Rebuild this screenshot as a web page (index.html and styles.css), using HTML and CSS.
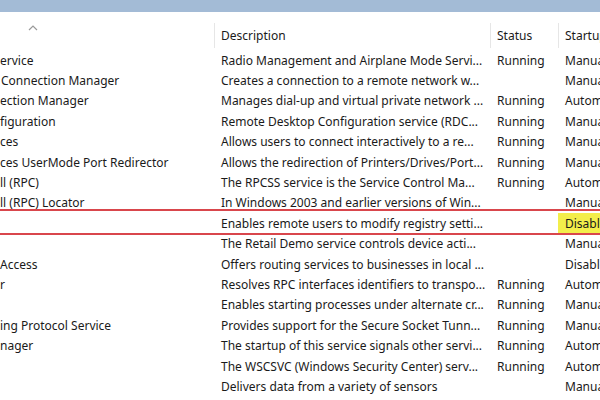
FILE: index.html
```html
<!DOCTYPE html>
<html>
<head>
<meta charset="utf-8">
<link rel="stylesheet" href="styles.css">
</head>
<body>
<div class="titlebar"></div>
<div class="table">
  <div class="head">
    <div class="hcell name"><svg class="caret" width="10" height="6" viewBox="0 0 10 6"><polyline points="1,5 5,1 9,5" fill="none" stroke="#9a9a9a" stroke-width="1.2"/></svg></div>
    <div class="hcell sep">Description</div>
    <div class="hcell sep">Status</div>
    <div class="hcell sep">Startup</div>
  </div>
  <div class="rows">
    <div class="row"><div class="c name">ervice</div><div class="c">Radio Management and Airplane Mode Servi...</div><div class="c">Running</div><div class="c">Manual</div></div>
    <div class="row"><div class="c name pad">Connection Manager</div><div class="c">Creates a connection to a remote network w...</div><div class="c"></div><div class="c">Manual</div></div>
    <div class="row"><div class="c name">ection Manager</div><div class="c">Manages dial-up and virtual private network ...</div><div class="c">Running</div><div class="c">Automatic</div></div>
    <div class="row"><div class="c name">figuration</div><div class="c">Remote Desktop Configuration service (RDC...</div><div class="c">Running</div><div class="c">Manual</div></div>
    <div class="row"><div class="c name">ces</div><div class="c">Allows users to connect interactively to a re...</div><div class="c">Running</div><div class="c">Manual</div></div>
    <div class="row"><div class="c name">ces UserMode Port Redirector</div><div class="c">Allows the redirection of Printers/Drives/Port...</div><div class="c">Running</div><div class="c">Manual</div></div>
    <div class="row"><div class="c name">ll (RPC)</div><div class="c">The RPCSS service is the Service Control Ma...</div><div class="c">Running</div><div class="c">Automatic</div></div>
    <div class="row"><div class="c name">ll (RPC) Locator</div><div class="c">In Windows 2003 and earlier versions of Win...</div><div class="c"></div><div class="c">Manual</div></div>
    <div class="row"><div class="c name"></div><div class="c">Enables remote users to modify registry setti...</div><div class="c"></div><div class="c hl">Disabled</div></div>
    <div class="row"><div class="c name"></div><div class="c">The Retail Demo service controls device acti...</div><div class="c"></div><div class="c">Manual</div></div>
    <div class="row"><div class="c name">Access</div><div class="c">Offers routing services to businesses in local ...</div><div class="c"></div><div class="c">Disabled</div></div>
    <div class="row"><div class="c name">r</div><div class="c">Resolves RPC interfaces identifiers to transpo...</div><div class="c">Running</div><div class="c">Automatic</div></div>
    <div class="row"><div class="c name"></div><div class="c">Enables starting processes under alternate cr...</div><div class="c">Running</div><div class="c">Manual</div></div>
    <div class="row"><div class="c name">ing Protocol Service</div><div class="c">Provides support for the Secure Socket Tunn...</div><div class="c">Running</div><div class="c">Manual</div></div>
    <div class="row"><div class="c name">nager</div><div class="c">The startup of this service signals other servi...</div><div class="c">Running</div><div class="c">Automatic</div></div>
    <div class="row"><div class="c name"></div><div class="c">The WSCSVC (Windows Security Center) serv...</div><div class="c">Running</div><div class="c">Automatic</div></div>
    <div class="row"><div class="c name"></div><div class="c">Delivers data from a variety of sensors</div><div class="c"></div><div class="c">Manual</div></div>
  </div>
  <div class="redline top"></div>
  <div class="redline bottom"></div>
</div>
</body>
</html>
```
FILE: styles.css
```css
html, body {
  margin: 0;
  padding: 0;
  background: #ffffff;
  width: 600px;
  height: 400px;
  overflow: hidden;
}
body {
  font-family: "Noto Sans", "Open Sans", sans-serif;
  font-size: 12px;
  color: #1a1a1a;
}
.titlebar {
  height: 12px;
  background: #a3bbd6;
}
.table {
  position: relative;
}
.head {
  display: grid;
  grid-template-columns: 214px 276px 68px 42px;
  height: 38px;
}
.hcell {
  display: flex;
  align-items: center;
  padding-left: 7px;
  white-space: nowrap;
  overflow: hidden;
  position: relative;
  padding-top: 8px;
}
.hcell.name {
  align-items: flex-start;
  padding-top: 13px;
  padding-left: 28px;
}
.hcell.sep::before {
  content: "";
  position: absolute;
  left: 0;
  top: 11px;
  bottom: 2px;
  width: 1px;
  background: #e6e6e6;
}
.caret {
  display: block;
}
.row {
  display: grid;
  grid-template-columns: 214px 276px 68px 42px;
  height: 20.4px;
  align-items: center;
}
.c {
  padding-left: 7px;
  white-space: nowrap;
  overflow: hidden;
  height: 100%;
  display: flex;
  align-items: center;
}
.c.name {
  padding-left: 0;
}
.c.name.pad {
  padding-left: 1px;
}
.c.hl {
  background: #f3ee4b;
}
.redline {
  position: absolute;
  left: 0;
  width: 600px;
  height: 2px;
  background: #d9464c;
}
.redline.top {
  top: 197px;
}
.redline.bottom {
  top: 221px;
}
```
